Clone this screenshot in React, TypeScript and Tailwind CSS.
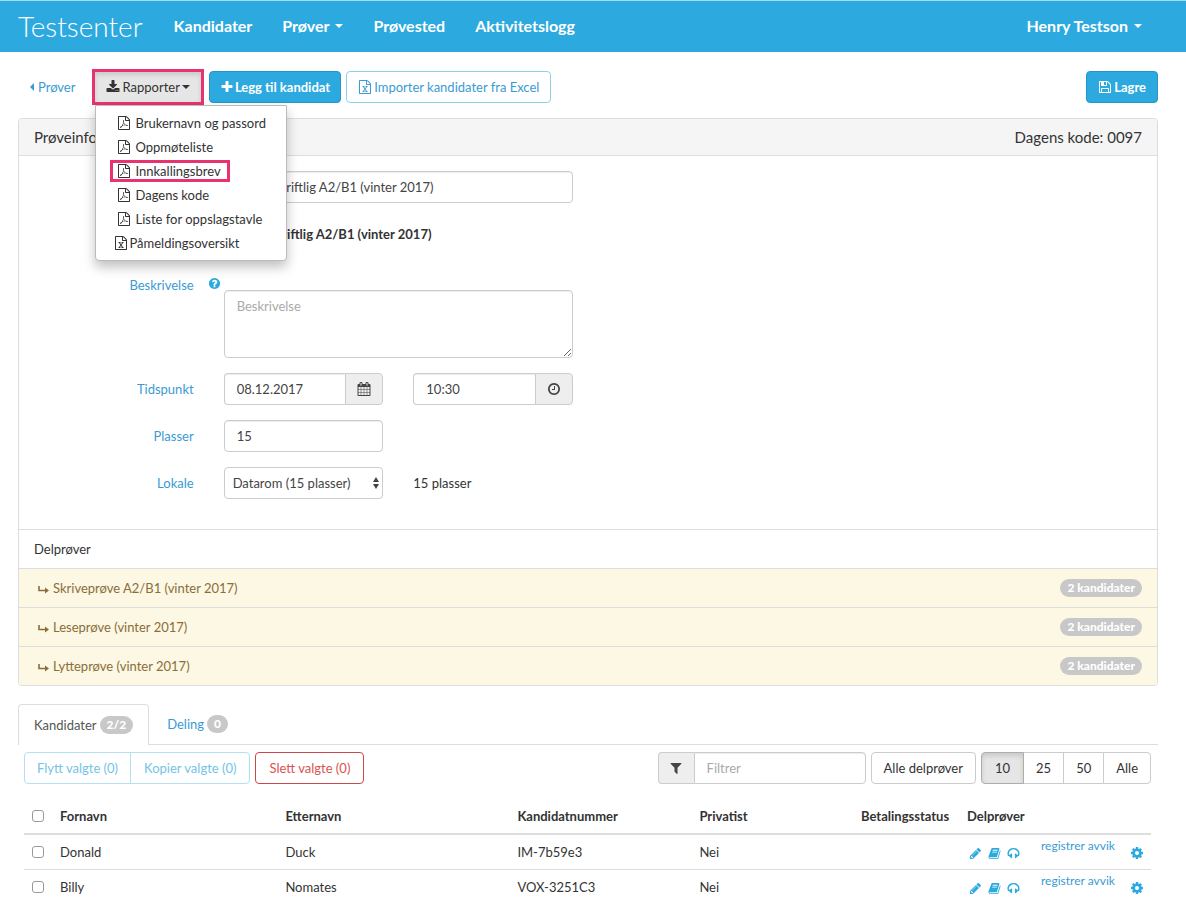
import { useState } from 'react';
import type { ReactNode } from 'react';

const FILE =
  'M1596 380q28 28 48 76t20 88v1152q0 40-28 68t-68 28h-1344q-40 0-68-28t-28-68v-1600q0-40 28-68t68-28h896q40 0 88 20t76 48zm-444-244v376h376q-10-29-22-41l-313-313q-12-12-41-22zm384 1528v-1024h-416q-40 0-68-28t-28-68v-416h-768v1536h1280z';
const CIRCLE =
  'm384 192q0 209-103 385.5t-279.5 279.5-385.5 103-385.5-103-279.5-279.5-103-385.5 103-385.5 279.5-279.5 385.5-103 385.5 103 279.5 279.5 103 385.5z';

const icons = {
  download:
    'M1344 1344q0-26-19-45t-45-19-45 19-19 45 19 45 45 19 45-19 19-45zm256 0q0-26-19-45t-45-19-45 19-19 45 19 45 45 19 45-19 19-45zm128-224v320q0 40-28 68t-68 28h-1472q-40 0-68-28t-28-68v-320q0-40 28-68t68-28h465l135 136q58 56 136 56t136-56l136-136h464q40 0 68 28t28 68zm-325-569q17 41-14 70l-448 448q-18 19-45 19t-45-19l-448-448q-31-29-14-70 17-39 59-39h256v-448q0-26 19-45t45-19h256q26 0 45 19t19 45v448h256q42 0 59 39z',
  plus: 'M1600 736v192q0 40-28 68t-68 28h-416v416q0 40-28 68t-68 28h-192q-40 0-68-28t-28-68v-416h-416q-40 0-68-28t-28-68v-192q0-40 28-68t68-28h416v-416q0-40 28-68t68-28h192q40 0 68 28t28 68v416h416q40 0 68 28t28 68z',
  excel:
    FILE +
    'm-979-234v106h281v-106h-75l103-161q5-7 10-16.5t7.5-13.5 3.5-4h2q1 4 5 10 2 4 4.5 7.5t6 8 6.5 8.5l107 161h-76v106h291v-106h-68l-192-273 195-282h67v-107h-279v107h74l-103 159q-4 7-10 16.5t-9 13.5l-2 3h-2q-1-4-5-10-6-11-17-23l-106-159h76v-107h-290v107h68l189 272-194 283h-68z',
  pdf:
    FILE +
    'm-514-593q33 26 84 56 59-7 117-7 147 0 177 49 16 22 2 52 0 1-1 2l-2 2v1q-6 38-71 38-48 0-115-20t-130-53q-221 24-392 83-153 262-242 262-15 0-28-7l-24-12q-1-1-6-5-10-10-6-36 9-40 56-91.5t132-96.5q14-9 23 6 2 2 2 4 52-85 107-197 68-136 104-262-24-82-30.5-159.5t6.5-127.5q11-40 42-40h22q23 0 35 15 18 21 9 68-2 6-4 8 1 3 1 8v30q-2 123-14 192 55 164 146 238zm-576 411q52-24 137-158-51 40-87.5 84t-49.5 74zm398-920q-15 42-2 132 1-7 7-44 0-3 7-43 1-4 4-8-1-1-1-2-1-2-1-3-1-22-13-36 0 1-1 2v2zm-124 661q135-54 284-81-2-1-13-9.5t-16-13.5q-76-67-127-176-27 86-83 197-30 56-45 83zm646-16q-24-24-140-24 76 28 124 28 14 0 18-1 0-1-2-3z',
  save: 'M512 1536h768v-384h-768v384zm896 0h128v-896q0-14-10-38.5t-20-34.5l-281-281q-10-10-34-20t-39-10v416q0 40-28 68t-68 28h-576q-40 0-68-28t-28-68v-416h-128v1280h128v-416q0-40 28-68t68-28h832q40 0 68 28t28 68v416zm-384-928v-320q0-13-9.5-22.5t-22.5-9.5h-192q-13 0-22.5 9.5t-9.5 22.5v320q0 13 9.5 22.5t22.5 9.5h192q13 0 22.5-9.5t9.5-22.5zm640 32v928q0 40-28 68t-68 28h-1344q-40 0-68-28t-28-68v-1344q0-40 28-68t68-28h928q40 0 88 20t76 48l280 280q28 28 48 76t20 88z',
  calendar:
    'M192 1664h288v-288h-288v288zm352 0h320v-288h-320v288zm-352-352h288v-320h-288v320zm352 0h320v-320h-320v320zm-352-384h288v-288h-288v288zm736 736h320v-288h-320v288zm-384-736h320v-288h-320v288zm768 736h288v-288h-288v288zm-384-352h320v-320h-320v320zm-352-864v-288q0-13-9.5-22.5t-22.5-9.5h-64q-13 0-22.5 9.5t-9.5 22.5v288q0 13 9.5 22.5t22.5 9.5h64q13 0 22.5-9.5t9.5-22.5zm736 864h288v-320h-288v320zm-384-384h320v-288h-320v288zm384 0h288v-288h-288v288zm32-480v-288q0-13-9.5-22.5t-22.5-9.5h-64q-13 0-22.5 9.5t-9.5 22.5v288q0 13 9.5 22.5t22.5 9.5h64q13 0 22.5-9.5t9.5-22.5zm384-64v1280q0 52-38 90t-90 38h-1408q-52 0-90-38t-38-90v-1280q0-52 38-90t90-38h128v-96q0-66 47-113t113-47h64q66 0 113 47t47 113v96h384v-96q0-66 47-113t113-47h64q66 0 113 47t47 113v96h128q52 0 90 38t38 90z',
  clock:
    'M1024 544v448q0 14-9 23t-23 9h-320q-14 0-23-9t-9-23v-64q0-14 9-23t23-9h224v-352q0-14 9-23t23-9h64q14 0 23 9t9 23zm416 352q0-148-73-273t-198-198-273-73-273 73-198 198-73 273 73 273 198 198 273 73 273-73 198-198 73-273zm224 0q0 209-103 385.5t-279.5 279.5-385.5 103-385.5-103-279.5-279.5-103-385.5 103-385.5 279.5-279.5 385.5-103 385.5 103 279.5 279.5 103 385.5z',
  filter:
    'M1595 295q17 41-14 70l-493 493v742q0 42-39 59-13 5-25 5-27 0-45-19l-256-256q-19-19-19-45v-486l-493-493q-31-29-14-70 17-39 59-39h1280q42 0 59 39z',
  question:
    'M1024 1376v-192q0-14-9-23t-23-9h-192q-14 0-23 9t-9 23v192q0 14 9 23t23 9h192q14 0 23-9t9-23zm256-672q0-88-55.5-163t-138.5-116-170-41q-243 0-371 213-15 24 8 42l132 100q7 6 19 6 16 0 25-12 53-68 86-92 34-24 86-24 48 0 85.5 26t37.5 59q0 38-20 61t-68 45q-63 28-115.5 86.5t-52.5 125.5v36q0 14 9 23t23 9h192q14 0 23-9t9-23q0-19 21.5-49.5t54.5-49.5q32-18 49-28.5t46-35 44.5-48 28-60.5 12.5-81z' +
    CIRCLE,
  pencil:
    'M491 1536l91-91-235-235-91 91v107h128v128h107zm523-928q0-22-22-22-10 0-17 7l-542 542q-7 7-7 17 0 22 22 22 10 0 17-7l542-542q7-7 7-17zm-54-192l416 416-832 832h-416v-416zm683 96q0 53-37 90l-166 166-416-416 166-165q36-38 90-38 53 0 91 38l235 234q37 39 37 91z',
  book: 'M1703 478q40 57 18 129l-275 906q-19 64-76.5 107.5t-122.5 43.5h-923q-77 0-148.5-53.5t-99.5-131.5q-24-67-2-127 0-4 3-27t4-37q1-8-3-21.5t-3-19.5q2-11 8-21t16.5-23.5 16.5-23.5q23-38 45-91.5t30-91.5q3-10 .5-30t-.5-28q3-11 17-28t17-23q21-36 42-92t25-90q1-9-2.5-32t.5-28q4-13 22-30.5t22-22.5q19-26 42.5-84.5t27.5-96.5q1-8-3-25.5t-2-26.5q2-8 9-18t18-23 17-21q8-12 16.5-30.5t15-35 16-36 19.5-32 26.5-23.5 36-11.5 47.5 5.5l-1 3q38-9 51-9h761q74 0 114 56t18 130l-274 906q-36 119-71.5 153.5t-128.5 34.5h-869q-27 0-38 15-11 16-1 43 24 70 144 70h923q29 0 56-15.5t35-41.5l300-987q7-22 5-57 38 15 59 43zm-1064 2q-4 13 2 22.5t20 9.5h608q13 0 25.5-9.5t16.5-22.5l21-64q4-13-2-22.5t-20-9.5h-608q-13 0-25.5 9.5t-16.5 22.5zm-83 256q-4 13 2 22.5t20 9.5h608q13 0 25.5-9.5t16.5-22.5l21-64q4-13-2-22.5t-20-9.5h-608q-13 0-25.5 9.5t-16.5 22.5z',
  headphones:
    'M1728 886q0 166-60 314l-20 49-185 33q-22 83-90.5 136.5t-156.5 53.5v32q0 14-9 23t-23 9h-64q-14 0-23-9t-9-23v-576q0-14 9-23t23-9h64q14 0 23 9t9 23v32q71 0 130 35.5t93 95.5l68-12q29-95 29-193 0-148-88-279t-236.5-209-315.5-78-315.5 78-236.5 209-88 279q0 98 29 193l68 12q34-60 93-95.5t130-35.5v-32q0-14 9-23t23-9h64q14 0 23 9t9 23v576q0 14-9 23t-23 9h-64q-14 0-23-9t-9-23v-32q-88 0-156.5-53.5t-90.5-136.5l-185-33-20-49q-60-148-60-314 0-151 67-291t179-242.5 266-163.5 320-61 320 61 266 163.5 179 242.5 67 291z',
  cog: 'M1152 896q0-106-75-181t-181-75-181 75-75 181 75 181 181 75 181-75 75-181zm512-109v222q0 12-8 23t-20 13l-185 28q-19 54-39 91 35 50 107 138 10 12 10 25t-9 23q-27 37-99 108t-94 71q-12 0-26-9l-138-108q-44 23-91 38-16 136-29 186-7 28-36 28h-222q-14 0-24.5-8.5t-11.5-21.5l-28-184q-49-16-90-37l-141 107q-10 9-25 9-14 0-25-11-126-114-165-168-7-10-7-23 0-12 8-23 15-21 51-66.5t54-70.5q-27-50-41-99l-183-27q-13-2-21-12.5t-8-23.5v-222q0-12 8-23t19-13l186-28q14-46 39-92-40-57-107-138-10-12-10-24 0-10 9-23 26-36 98.5-107.5t94.5-71.5q13 0 26 10l138 107q44-23 91-38 16-136 29-186 7-28 36-28h222q14 0 24.5 8.5t11.5 21.5l28 184q49 16 90 37l142-107q9-9 24-9 13 0 25 10 129 119 165 170 7 8 7 22 0 12-8 23-15 21-51 66.5t-54 70.5q26 50 41 98l183 28q13 2 21 12.5t8 23.5z',
};

const Icon = ({ name, className = 'size-[14px]' }: { name: keyof typeof icons; className?: string }) => (
  <svg viewBox="0 0 1792 1792" fill="currentColor" aria-hidden="true" className={`shrink-0 ${className}`}>
    <path d={icons[name]} />
  </svg>
);

const Caret = () => (
  <svg viewBox="0 0 8 4" fill="currentColor" aria-hidden="true" className="h-1 w-2 shrink-0">
    <path d="M0 0h8L4 4z" />
  </svg>
);

const SubArrow = () => (
  <svg viewBox="0 0 11 8" aria-hidden="true" className="mt-1 h-2 w-[11px] shrink-0">
    <path d="M1 0v4.5h7" fill="none" stroke="currentColor" strokeWidth="1.6" />
    <path d="M7 1.5v6l4-3z" fill="currentColor" />
  </svg>
);

const Badge = ({ children }: { children: ReactNode }) => (
  <span className="inline-block rounded-full bg-[#c8c8c8] px-[7px] text-xs leading-[18px] font-black text-white">{children}</span>
);

const reports = ['Brukernavn og passord', 'Oppmøteliste', 'Innkallingsbrev', 'Dagens kode', 'Liste for oppslagstavle'];
const subTests = ['Skriveprøve A2/B1 (vinter 2017)', 'Leseprøve (vinter 2017)', 'Lytteprøve (vinter 2017)'];
const candidates = [
  { first: 'Donald', last: 'Duck', number: 'IM-7b59e3', external: 'Nei' },
  { first: 'Billy', last: 'Nomates', number: 'VOX-3251C3', external: 'Nei' },
];
const pageSizes = ['10', '25', '50', 'Alle'];

const control = 'h-8 w-full min-w-0 border border-[#ccc] bg-white px-3 text-[#444] shadow-[inset_0_1px_1px_rgba(0,0,0,0.075)]';
const addon = 'flex h-8 shrink-0 items-center justify-center border border-[#ccc] bg-[#eee] text-[#444]';
const button = 'flex h-8 items-center rounded border whitespace-nowrap';
const primary = 'border-[#2596ca] bg-[#2ca9df] font-bold text-white';
const label = 'col-span-2 px-[15px] pt-[6px] text-right text-[#3a9bd3]';
const checkbox = 'block size-3 appearance-none rounded-[3px] border border-[#999] bg-white checked:bg-[#2ca9df]';

const Navbar = () => (
  <header className="flex h-[52px] items-center border-t border-[#a5daf2] bg-[#2ca9df] pr-11 pb-[2px] pl-[18px] text-base leading-5 font-bold text-white">
    <a href="#" className="mr-[31px] text-[28px] font-light">Testsenter</a>
    <nav className="flex flex-1 items-center gap-[30px]">
      <a href="#kandidater">Kandidater</a>
      <button type="button" className="flex items-center gap-[6px]">Prøver <Caret /></button>
      <a href="#provested">Prøvested</a>
      <a href="#logg">Aktivitetslogg</a>
    </nav>
    <button type="button" className="flex items-center gap-[6px]">Henry Testson <Caret /></button>
  </header>
);

const Toolbar = () => {
  const [open, setOpen] = useState(true);

  return (
    <div className="flex items-center py-[17px] pl-3">
      <a href="#prover" className="mr-[17px] flex items-center gap-1 text-[#3a9bd3]">
        <svg viewBox="0 0 4 8" fill="currentColor" aria-hidden="true" className="h-2 w-1"><path d="M4 0v8L0 4z" /></svg>
        Prøver
      </a>
      <div className="relative mr-[5px]">
        <button
          type="button"
          aria-expanded={open}
          onClick={() => setOpen(!open)}
          className="flex h-9 items-center gap-[2px] border-[3px] border-[#e8336f] bg-[#e6e6e6] px-[11px] text-[#333] shadow-[inset_0_3px_5px_rgba(0,0,0,0.125)]"
        >
          <Icon name="download" /> Rapporter <Caret />
        </button>
        {open && (
          <ul className="absolute top-full left-[3px] z-10 w-48 rounded-b border border-[#bbb] bg-white py-[5px] text-[#333] shadow-[0_6px_12px_rgba(0,0,0,0.25)]">
            {reports.map((report) => (
              <li key={report} className="flex h-6 items-center px-[14px]">
                <a
                  href="#rapport"
                  className={`flex h-[22px] items-center gap-1 border-[3px] pr-[6px] pl-1 whitespace-nowrap ${report === 'Innkallingsbrev' ? 'border-[#e8336f]' : 'border-transparent'}`}
                >
                  <Icon name="pdf" /> {report}
                </a>
              </li>
            ))}
            <li className="flex h-6 items-center px-[18px]">
              <a href="#rapport" className="flex items-center gap-[1px]"><Icon name="excel" /> Påmeldingsoversikt</a>
            </li>
          </ul>
        )}
      </div>
      <button type="button" className={`${button} ${primary} mr-[5px] gap-px px-[10px]`}>
        <Icon name="plus" /> Legg til kandidat
      </button>
      <button type="button" className={`${button} gap-[2px] border-[#8fd0ea] bg-white px-[11px] text-[#3a9bd3]`}>
        <Icon name="excel" /> Importer kandidater fra Excel
      </button>
      <button type="button" className={`${button} ${primary} ml-auto gap-[2px] px-[11px]`}>
        <Icon name="save" /> Lagre
      </button>
    </div>
  );
};

const TestForm = () => (
  <form className="flex flex-col gap-[15px] pt-[15px] pb-[30px]">
    <div className="grid grid-cols-12">
      <div className="col-span-4 col-start-3 px-[15px]">
        <input aria-label="Navn" defaultValue="Norsk skriftlig A2/B1 (vinter 2017)" className={`${control} rounded`} />
      </div>
    </div>
    <div className="grid grid-cols-12">
      <p className="col-span-4 col-start-3 flex h-8 items-center px-[15px] font-bold">Norsk - skriftlig A2/B1 (vinter 2017)</p>
    </div>
    <div className="grid grid-cols-12">
      <label htmlFor="description" className={`${label} mt-1`}>Beskrivelse</label>
      <div className="col-span-4 px-[15px]">
        <div className="flex h-[25px] pt-3">
          <button type="button" aria-label="Hjelp" className="-ml-4 size-[13px] text-[#2ca9df]">
            <Icon name="question" className="size-[13px]" />
          </button>
        </div>
        <textarea id="description" placeholder="Beskrivelse" className={`${control} block h-[68px] resize rounded py-[5px] placeholder:text-[#aaa]`} />
      </div>
    </div>
    <div className="grid grid-cols-12">
      <label htmlFor="date" className={label}>Tidspunkt</label>
      <div className="col-span-2 flex px-[15px]">
        <input id="date" defaultValue="08.12.2017" className={`${control} rounded-l border-r-0`} />
        <button type="button" aria-label="Velg dato" className={`${addon} w-[38px] rounded-r`}><Icon name="calendar" /></button>
      </div>
      <div className="col-span-2 flex px-[15px]">
        <input aria-label="Klokkeslett" defaultValue="10:30" className={`${control} rounded-l border-r-0`} />
        <button type="button" aria-label="Velg klokkeslett" className={`${addon} w-[38px] rounded-r`}><Icon name="clock" /></button>
      </div>
    </div>
    <div className="grid grid-cols-12">
      <label htmlFor="seats" className={label}>Plasser</label>
      <div className="col-span-2 px-[15px]">
        <input id="seats" defaultValue="15" className={`${control} rounded`} />
      </div>
    </div>
    <div className="grid grid-cols-12">
      <label htmlFor="room" className={label}>Lokale</label>
      <div className="col-span-2 px-[15px]">
        <div className="relative">
          <select id="room" className="h-8 w-full appearance-none rounded border border-[#ccc] bg-white pl-2 text-[#444]">
            <option>Datarom (15 plasser)</option>
          </select>
          <svg viewBox="0 0 6 12" fill="currentColor" aria-hidden="true" className="pointer-events-none absolute top-[10px] right-1 h-3 w-[6px] text-[#444]">
            <path d="M0 5h6L3 0zM0 7h6l-3 5z" />
          </svg>
        </div>
      </div>
      <p className="col-span-2 px-[15px] pt-[6px]">15 plasser</p>
    </div>
  </form>
);

const CandidateActions = () => (
  <div className="flex items-center gap-[5px] pt-[7px] pr-[7px] pl-[6px]">
    <div className="flex">
      <button type="button" className={`${button} rounded-r-none border-[#b4e0f1] px-3 text-[#73c4e6]`}>Flytt valgte (0)</button>
      <button type="button" className={`${button} -ml-px rounded-l-none border-[#b4e0f1] px-[13px] text-[#73c4e6]`}>Kopier valgte (0)</button>
    </div>
    <button type="button" className={`${button} border-[#c9484c] px-[13px] text-[#d9534f]`}>Slett valgte (0)</button>
    <div className="ml-auto flex w-52">
      <span className={`${addon} w-9 rounded-l border-r-0`}><Icon name="filter" /></span>
      <input aria-label="Filtrer" placeholder="Filtrer" className={`${control} rounded-r placeholder:text-[#aaa]`} />
    </div>
    <button type="button" className={`${button} border-[#ccc] px-3`}>Alle delprøver</button>
    <div className="flex">
      {pageSizes.map((size, i) => (
        <button
          key={size}
          type="button"
          className={`h-8 border px-3 first:rounded-l first:px-[13px] last:rounded-r not-first:-ml-px ${i === 0 ? 'z-1 border-[#adadad] bg-[#e6e6e6] shadow-[inset_0_3px_5px_rgba(0,0,0,0.125)]' : 'border-[#ccc] bg-white'}`}
        >
          {size}
        </button>
      ))}
    </div>
  </div>
);

const CandidateTable = () => (
  <div className="pt-[14px] pr-[7px] pl-[6px]">
    <table className="w-full table-fixed text-left">
      <thead>
        <tr className="h-9 border-b-2 border-[#ddd]">
          <th className="w-7 pl-2"><input type="checkbox" aria-label="Velg alle" className={checkbox} /></th>
          <th className="w-[20%] px-2">Fornavn</th>
          <th className="w-[232px] px-2">Etternavn</th>
          <th className="w-[182px] px-2">Kandidatnummer</th>
          <th className="px-2">Privatist</th>
          <th className="w-[106px] px-2">Betalingsstatus</th>
          <th className="w-[74px] px-2">Delprøver</th>
          <th className="w-24" />
          <th className="w-[22px]" />
        </tr>
      </thead>
      <tbody>
        {candidates.map((c) => (
          <tr key={c.number} className="h-[35px] not-first:border-t not-first:border-[#ddd]">
            <td className="pl-2"><input type="checkbox" aria-label={`Velg ${c.first}`} className={checkbox} /></td>
            <td className="px-2">{c.first}</td>
            <td className="px-2">{c.last}</td>
            <td className="px-2">{c.number}</td>
            <td className="px-2">{c.external}</td>
            <td />
            <td className="px-2 text-[#2ca9df]">
              <div className="flex gap-[6px] pt-[3px] pl-[2px]">
                <Icon name="pencil" className="size-[13px]" />
                <Icon name="book" className="size-[13px]" />
                <Icon name="headphones" className="size-[13px]" />
              </div>
            </td>
            <td className="px-2 align-top">
              <a href="#avvik" className="block pt-px text-xs leading-5 whitespace-nowrap text-[#3a9bd3]">registrer avvik</a>
            </td>
            <td className="text-[#2ca9df]">
              <button type="button" aria-label="Innstillinger" className="mt-[2px] ml-px block"><Icon name="cog" /></button>
            </td>
          </tr>
        ))}
      </tbody>
    </table>
  </div>
);

export default function App() {
  return (
    <div className="bg-white font-[Lato,'Liberation_Sans',sans-serif] text-[13px] leading-5 text-[#333]">
      <Navbar />
      <main className="pr-7 pl-[18px]">
        <Toolbar />

        <section className="-mt-1 overflow-hidden rounded border border-[#ddd]">
          <div className="flex h-[37px] items-center justify-between border-b border-[#ddd] bg-[#f5f5f5] px-[15px] text-[15px]">
            <h2>Prøveinformasjon</h2>
            <span>Dagens kode: 0097</span>
          </div>
          <TestForm />
          <h3 className="flex h-[39px] items-center border-t border-[#ddd] px-[15px]">Delprøver</h3>
          <ul>
            {subTests.map((test) => (
              <li key={test} className="flex h-[39px] items-center justify-between border-t border-[#ddd] bg-[#fcf8e3] px-[15px] text-[#8a6d3b]">
                <a href="#delprove" className="flex items-center gap-1 pl-1"><SubArrow /> {test}</a>
                <Badge>2 kandidater</Badge>
              </li>
            ))}
          </ul>
        </section>

        <div className="mt-[18px] flex border-b border-[#ddd]">
          <button type="button" className="-mb-px flex h-[41px] items-center gap-[3px] rounded-t border border-b-0 border-[#ddd] bg-white px-[15px] pb-px text-[#555]">
            Kandidater <Badge>2/2</Badge>
          </button>
          <button type="button" className="flex h-10 items-center gap-[3px] px-[18px] text-[#3a9bd3]">
            Deling <Badge>0</Badge>
          </button>
        </div>
        <CandidateActions />
        <CandidateTable />
      </main>
    </div>
  );
}
